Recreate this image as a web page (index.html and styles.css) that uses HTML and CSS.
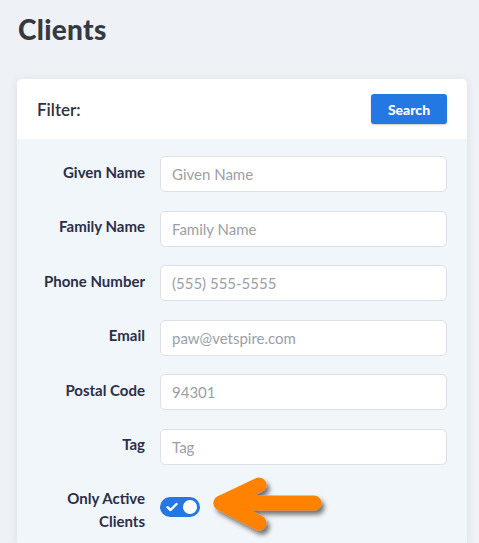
FILE: index.html
```html
<!DOCTYPE html>
<html>
<head>
<meta charset="utf-8">
<link rel="stylesheet" href="styles.css">
</head>
<body>
<div class="page">
  <h1 class="title">Clients</h1>
  <div class="card">
    <div class="card-header">
      <span class="filter-label">Filter:</span>
      <button class="btn-search">Search</button>
    </div>
    <div class="card-body">
      <div class="row"><label class="lbl">Given Name</label><input class="field" placeholder="Given Name"></div>
      <div class="row"><label class="lbl">Family Name</label><input class="field" placeholder="Family Name"></div>
      <div class="row"><label class="lbl">Phone Number</label><input class="field" placeholder="(555) 555-5555"></div>
      <div class="row"><label class="lbl">Email</label><input class="field" placeholder="paw@vetspire.com"></div>
      <div class="row"><label class="lbl">Postal Code</label><input class="field" placeholder="94301"></div>
      <div class="row"><label class="lbl">Tag</label><input class="field" placeholder="Tag"></div>
      <div class="row row-toggle">
        <label class="lbl">Only Active<br>Clients</label>
        <div class="toggle-wrap">
          <span class="toggle">
            <svg class="check" width="12" height="10" viewBox="0 0 12 10"><path d="M1.5 5.2 L4.5 8 L10.5 2" fill="none" stroke="#fff" stroke-width="2.4" stroke-linecap="round" stroke-linejoin="round"/></svg>
            <span class="knob"></span>
          </span>
          <svg class="arrow" width="130" height="70" viewBox="0 0 130 70">
            <defs>
              <filter id="sh" x="-20%" y="-30%" width="150%" height="170%">
                <feGaussianBlur in="SourceAlpha" stdDeviation="2.5"/>
                <feOffset dx="3" dy="4" result="b"/>
                <feComponentTransfer><feFuncA type="linear" slope="0.55"/></feComponentTransfer>
                <feMerge><feMergeNode/><feMergeNode in="SourceGraphic"/></feMerge>
              </filter>
            </defs>
            <g filter="url(#sh)" fill="none" stroke="#ff8205" stroke-width="15" stroke-linecap="round" stroke-linejoin="round">
              <path d="M105 27 L12 27"/>
              <path d="M50 9 L12 27 L50 47"/>
            </g>
          </svg>
        </div>
      </div>
    </div>
  </div>
</div>
</body>
</html>
```
FILE: styles.css
```css
html, body {
  margin: 0;
  padding: 0;
}
body {
  background: #eef2f6;
  font-family: "Lato", "Source Sans Pro", sans-serif;
  color: #2f3542;
  width: 479px;
  height: 543px;
  overflow: hidden;
}
.page {
  padding: 10px 12px 0 17px;
}
.title {
  margin: 0 0 0 1px;
  font-size: 28px;
  font-weight: 900;
  color: #363a40;
  line-height: 38px;
  letter-spacing: 0.3px;
}
.card {
  margin-top: 31px;
  width: 450px;
  background: #f1f6fa;
  border-radius: 5px;
  box-shadow: 0 1px 8px rgba(40, 60, 90, 0.10);
}
.card-header {
  display: flex;
  align-items: center;
  justify-content: space-between;
  height: 60px;
  padding: 0 20px;
  background: #fff;
  border-radius: 5px 5px 0 0;
}
.filter-label {
  font-size: 17px;
  font-weight: 600;
  color: #2e323a;
}
.btn-search {
  width: 76px;
  height: 30px;
  border: none;
  border-radius: 3px;
  background: #2478e1;
  color: #fff;
  font-family: inherit;
  font-size: 14px;
  font-weight: 900;
  box-shadow: 0 1px 2px rgba(0, 0, 0, 0.2);
}
.card-body {
  padding: 17px 20px 0 0;
  display: flex;
  flex-direction: column;
  gap: 18.5px;
}
.row {
  display: flex;
  align-items: center;
}
.lbl {
  width: 128px;
  text-align: right;
  padding-right: 15px;
  margin-bottom: 4px;
  font-size: 15px;
  font-weight: 700;
  color: #2b2f48;
  line-height: 23px;
}
.field {
  box-sizing: border-box;
  width: 287px;
  height: 36px;
  border: 1px solid #dce1e7;
  border-radius: 5px;
  background: #fff;
  padding: 0 11px;
  font-family: inherit;
  font-size: 15px;
  color: #333;
  outline: none;
}
.field::placeholder {
  color: #9ba0a6;
}
.row-toggle {
  align-items: flex-start;
  margin-top: 4px;
}
.row-toggle .lbl {
  margin-bottom: 0;
}
.toggle-wrap {
  display: flex;
  align-items: flex-start;
  margin-top: 10px;
}
.toggle {
  position: relative;
  display: inline-flex;
  align-items: center;
  width: 40px;
  height: 20px;
  border-radius: 10px;
  background: #2478e1;
}
.check {
  margin-left: 6px;
}
.knob {
  position: absolute;
  right: 3px;
  top: 3px;
  width: 14px;
  height: 14px;
  border-radius: 50%;
  background: #fff;
}
.arrow {
  margin-left: 9px;
  margin-top: -21px;
}
```
